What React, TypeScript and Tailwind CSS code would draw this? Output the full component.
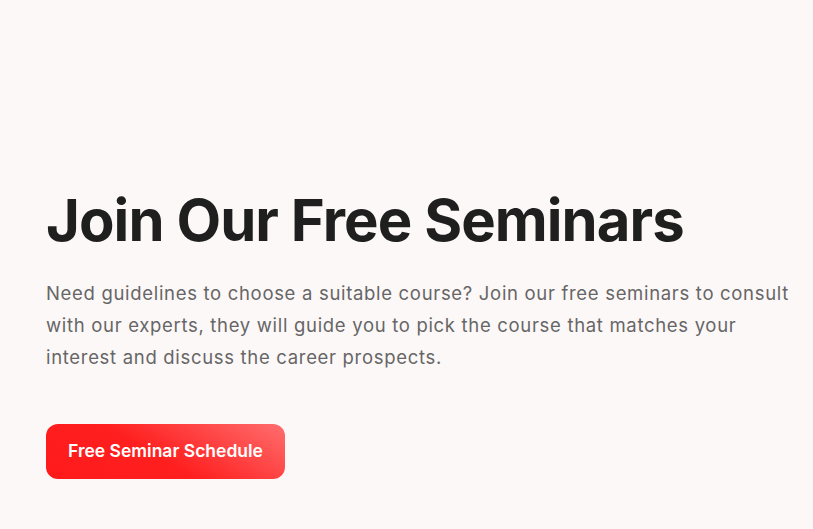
export default function App() {
  return (
    <div className="min-h-[529px] w-full bg-[#fdf8f8] font-['Inter',sans-serif]">
      <section className="pl-[46px] pr-[12px] pt-[185px]">
        <h1 className="text-[58px] font-bold leading-[70px] tracking-[-0.016em] text-[#1f1f1f]">
          Join Our Free Seminars
        </h1>
        <p className="mt-[22px] max-w-[752px] text-[18.5px] leading-[32px] tracking-[0.037em] text-[#666666]">
          Need guidelines to choose a suitable course? Join our free seminars to consult with our experts, they will guide you to pick the course that matches your interest and discuss the career prospects.
        </p>
        <button className="mt-[51px] h-[55px] w-[239px] rounded-[12px] bg-[linear-gradient(30deg,#ff1a1a_0%,#ff1f1f_45%,#ff6e6e_100%)] text-[17.5px] font-semibold text-white">
          Free Seminar Schedule
        </button>
      </section>
    </div>
  );
}
